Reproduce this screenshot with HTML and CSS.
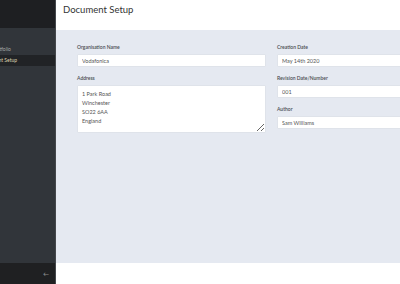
FILE: index.html
```html
<!DOCTYPE html>
<html>
<head>
    <title>Document Setup</title>
    <link rel="stylesheet" href="styles.css">
</head>
<body>
    <aside class="sidebar">
        <div class="brand"></div>
        <ul class="nav">
            <li class="nav-item">Company Portfolio</li>
            <li class="nav-item active">Document Setup</li>
        </ul>
        <div class="sidebar-footer">
            <span class="collapse-icon">&#8592;</span>
        </div>
    </aside>

    <div class="main">
        <div class="page-header">
            <h1>Document Setup</h1>
        </div>

        <div class="content">
            <form class="setup-form">
                <div class="form-col">
                    <div class="field">
                        <label>Organisation Name</label>
                        <input type="text" value="Vodafonica">
                    </div>
                    <div class="field">
                        <label>Address</label>
                        <textarea rows="4">1 Park Road
Winchester
SO22 6AA
England</textarea>
                    </div>
                </div>
                <div class="form-col">
                    <div class="field">
                        <label>Creation Date</label>
                        <input type="text" value="May 14th 2020">
                    </div>
                    <div class="field">
                        <label>Revision Date/Number</label>
                        <input type="text" value="001">
                    </div>
                    <div class="field">
                        <label>Author</label>
                        <input type="text" value="Sam Williams">
                    </div>
                </div>
            </form>
        </div>

        <div class="page-footer"></div>
    </div>
</body>
</html>
```

FILE: styles.css
```css
/* Page frame */
body {
    margin: 0;
    display: flex;
    height: 284px;
    overflow: hidden;
    font-family: Lato, "Open Sans", sans-serif;
}

/* Sidebar */
.sidebar {
    width: 55px;
    flex-shrink: 0;
    display: flex;
    flex-direction: column;
    background-color: #31353a;
    border-right: 1px solid #45484c;
    overflow: hidden;
}

.brand {
    height: 28px;
    background-color: #1e1f22;
}

.nav {
    flex: 1;
    list-style: none;
    margin: 0;
    padding: 16px 0 0 0;
}

.nav-item {
    height: 11px;
    line-height: 11px;
    font-size: 5px;
    color: #a4a6a8;
    white-space: nowrap;
    margin-left: -30px;
}

.nav-item.active {
    background-color: #212326;
    color: #ddd3ae;
    margin-left: 0;
    text-indent: -20px;
}

.sidebar-footer {
    height: 21px;
    background-color: #1f2022;
    display: flex;
    align-items: center;
    justify-content: flex-end;
    padding-right: 6px;
}

.collapse-icon {
    color: #8a8c8e;
    font-size: 6px;
    font-weight: 700;
}

/* Main area */
.main {
    flex: 1;
    min-width: 0;
    display: flex;
    flex-direction: column;
}

.page-header {
    height: 30px;
    background-color: #fff;
    padding: 0 7px;
}

.page-header h1 {
    margin: 0;
    padding-top: 4px;
    font-size: 9.5px;
    font-weight: 400;
    color: #333;
}

.content {
    flex: 1;
    background-color: #e5e9f1;
    padding: 14px 0 0 21px;
    overflow: hidden;
}

.page-footer {
    height: 21px;
    background-color: #fff;
}

/* Form */
.setup-form {
    display: flex;
    gap: 11px;
    width: 400px;
}

.form-col {
    width: 189px;
    flex-shrink: 0;
    display: flex;
    flex-direction: column;
    gap: 8px;
}

.field {
    display: flex;
    flex-direction: column;
    gap: 4px;
}

.field label {
    font-size: 5px;
    line-height: 6px;
    font-weight: 600;
    color: #4a4d52;
}

.field input,
.field textarea {
    box-sizing: border-box;
    border: 1px solid #dfe3ea;
    border-radius: 1px;
    background-color: #fff;
    font-family: Lato, "Open Sans", sans-serif;
    font-size: 5.5px;
    color: #555;
    padding: 0 4px;
    margin: 0;
}

.field input {
    height: 13px;
}

.field textarea {
    height: 48px;
    padding-top: 4px;
    line-height: 9px;
    resize: vertical;
}
```
